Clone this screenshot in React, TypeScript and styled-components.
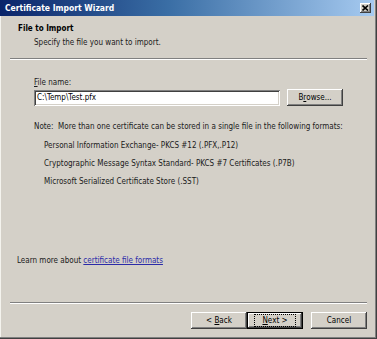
import React from 'react';
import styled, { createGlobalStyle } from 'styled-components';

const GlobalStyle = createGlobalStyle`
  html, body {
    margin: 0;
    padding: 0;
    background: #d4d0c8;
  }
  body {
    font-family: "DejaVu Sans Condensed", "DejaVu Sans", sans-serif;
    font-size: 8px;
    color: #1a1a1a;
  }
`;

const Window = styled.div`
  box-sizing: border-box;
  width: 377px;
  height: 339px;
  display: flex;
  flex-direction: column;
  background: #d4d0c8;
  padding: 0 3px 2px 0;
  box-shadow: inset -1px -1px #404040, inset -2px -2px #808080, inset 1px 0 #f4f3ee;
`;

const TitleBar = styled.div`
  height: 16px;
  display: flex;
  align-items: center;
  justify-content: space-between;
  padding: 0 3px 0 5px;
  background: linear-gradient(to right, #0a246a, #3a6ea5 45%, #a6caf0);
`;

const TitleText = styled.div`
  color: #fff;
  font-weight: bold;
  font-size: 8.5px;
  line-height: 16px;
`;

const CloseButton = styled.div`
  width: 11px;
  height: 10px;
  display: flex;
  align-items: center;
  justify-content: center;
  background: #d4d0c8;
  box-shadow: inset -1px -1px #404040, inset 1px 1px #fff, inset -2px -2px #808080;
`;

const Body = styled.div`
  flex: 1;
  display: flex;
  flex-direction: column;
`;

const Header = styled.div`
  padding: 8px 0 0 18px;
`;

const HeaderTitle = styled.div`
  font-weight: bold;
  line-height: 10px;
  color: #000;
`;

const HeaderSub = styled.div`
  margin-top: 4px;
  padding-left: 16px;
  line-height: 10px;
`;

const Separator = styled.div<{ $top: number }>`
  margin: ${(p) => p.$top}px 7px 0 10px;
  border-top: 1px solid #808080;
  border-bottom: 1px solid #fff;
`;

const Content = styled.div`
  padding-left: 34px;
  display: flex;
  flex-direction: column;
`;

const Label = styled.div`
  margin-top: 18px;
  line-height: 10px;
`;

const FileRow = styled.div`
  margin-top: 1px;
  display: flex;
  align-items: center;
`;

const TextBox = styled.div`
  box-sizing: border-box;
  width: 246px;
  height: 16px;
  padding: 0 3px;
  line-height: 16px;
  background: #fff;
  color: #000;
  box-shadow: inset 1px 1px #808080, inset -1px -1px #fff, inset 2px 2px #404040, inset -2px -2px #d4d0c8;
`;

const Button = styled.div<{ $focused?: boolean }>`
  box-sizing: border-box;
  width: 56px;
  height: 17px;
  display: flex;
  align-items: center;
  justify-content: center;
  color: #000;
  background: #d4d0c8;
  white-space: pre;
  box-shadow: ${(p) =>
    p.$focused
      ? 'inset 0 0 0 1px #000, inset -2px -2px #404040, inset 2px 2px #fff, inset -3px -3px #808080'
      : 'inset -1px -1px #404040, inset 1px 1px #fff, inset -2px -2px #808080'};
`;

const FocusRing = styled.span`
  padding: 1px 7px;
  outline: 1px dotted #000;
  outline-offset: 0;
`;

const BrowseButton = styled(Button)`
  margin-left: 7px;
`;

const Note = styled.div`
  margin-top: 16px;
  line-height: 10px;
`;

const FormatList = styled.div`
  margin-top: 9px;
  padding-left: 10px;
  display: flex;
  flex-direction: column;
  gap: 8px;
`;

const FormatItem = styled.div`
  line-height: 10px;
`;

const LearnMore = styled.div`
  margin-top: auto;
  padding-left: 17px;
  line-height: 10px;
`;

const Link = styled.span`
  color: #2b2ba8;
  text-decoration: underline;
`;

const Footer = styled.div`
  display: flex;
  justify-content: flex-end;
  padding: 8px 7px 8px 0;
`;

const NavGroup = styled.div`
  display: flex;
  margin-right: 8px;
`;

const formats = [
  'Personal Information Exchange- PKCS #12 (.PFX,.P12)',
  'Cryptographic Message Syntax Standard- PKCS #7 Certificates (.P7B)',
  'Microsoft Serialized Certificate Store (.SST)',
];

export default function App() {
  return (
    <>
      <GlobalStyle />
      <Window>
        <TitleBar>
          <TitleText>Certificate Import Wizard</TitleText>
          <CloseButton>
            <svg width="7" height="6" viewBox="0 0 7 6">
              <path d="M0.5 0.5 L6 5.5 M6 0.5 L0.5 5.5" stroke="#000" strokeWidth="1.6" />
            </svg>
          </CloseButton>
        </TitleBar>
        <Body>
          <Header>
            <HeaderTitle>File to Import</HeaderTitle>
            <HeaderSub>Specify the file you want to import.</HeaderSub>
          </Header>
          <Separator $top={10} />
          <Content>
            <Label>
              <u>F</u>ile name:
            </Label>
            <FileRow>
              <TextBox>C:\Temp\Test.pfx</TextBox>
              <BrowseButton>
                B<u>r</u>owse...
              </BrowseButton>
            </FileRow>
            <Note>Note:&nbsp; More than one certificate can be stored in a single file in the following formats:</Note>
            <FormatList>
              {formats.map((f) => (
                <FormatItem key={f}>{f}</FormatItem>
              ))}
            </FormatList>
          </Content>
          <LearnMore>
            Learn more about <Link>certificate file formats</Link>
          </LearnMore>
          <Separator $top={36} />
          <Footer>
            <NavGroup>
              <Button>
                {'< '}
                <u>B</u>ack
              </Button>
              <Button $focused>
                <FocusRing>
                  <u>N</u>ext {'>'}
                </FocusRing>
              </Button>
            </NavGroup>
            <Button>Cancel</Button>
          </Footer>
        </Body>
      </Window>
    </>
  );
}
